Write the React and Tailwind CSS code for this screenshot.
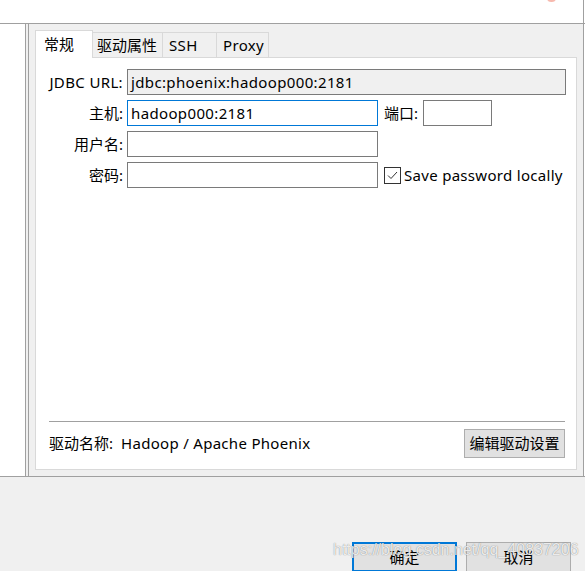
import React from "react";

const font = { fontFamily: '"Noto Sans", "Noto Sans CJK SC", sans-serif' };

function Input({ w, value = "", focused = false, disabled = false }) {
  return (
    <div
      className={`h-[26px] flex items-center pl-[3px] border text-[15px] text-black ${
        focused ? "border-[#0078d7]" : "border-[#7a7a7a]"
      } ${disabled ? "bg-[#f0f0f0]" : "bg-white"}`}
      style={{ width: w }}
    >
      <span className="leading-none tracking-[0.36px]">{value}</span>
    </div>
  );
}

function Label({ children, latin = false }) {
  return (
    <div className={`w-[74px] text-right text-[15px] text-black leading-none shrink-0 ${latin ? "tracking-[0.36px]" : ""}`}>
      {children}
    </div>
  );
}

export default function App() {
  return (
    <div className="w-[585px] h-[571px] bg-[#f0f0f0] flex flex-col overflow-hidden relative select-none" style={font}>
      {/* top white strip */}
      <div className="h-[23px] flex shrink-0">
        <div className="w-[583px] bg-white relative">
          <div className="absolute left-[547px] top-[-6px] w-[9px] h-[8px] rounded-full bg-[#f7b9ae]" />
        </div>
        <div className="w-px bg-[#a0a0a0]" />
        <div className="w-px bg-white" />
      </div>
      <div className="h-px bg-[#a0a0a0] shrink-0" />

      {/* main area */}
      <div className="h-[452px] flex shrink-0">
        <div className="w-[25px] bg-white" />
        <div className="w-px bg-[#a0a0a0]" />
        <div className="w-[2px] bg-[#f0f0f0]" />
        <div className="w-px bg-[#a0a0a0]" />
        <div className="w-[554px] bg-[#f0f0f0] p-[6px] flex flex-col">
          {/* tabs */}
          <div className="h-[27px] flex items-end shrink-0">
            <div className="relative z-10 h-[28px] mb-[-1px] w-[58px] bg-white border border-b-0 border-[#d9d9d9] pl-[8px] pt-[4px] text-[15px] text-black leading-[18px]">
              常规
            </div>
            <div className="h-[25px] w-[70px] border-t border-r border-[#d9d9d9] bg-[#f0f0f0] pl-[4px] pt-[3px] text-[15px] text-black leading-[18px]">
              驱动属性
            </div>
            <div className="h-[25px] w-[54px] border-t border-r border-[#d9d9d9] bg-[#f0f0f0] pl-[6px] pt-[3px] text-[15px] text-black leading-[18px] tracking-[0.36px]">
              SSH
            </div>
            <div className="h-[25px] w-[52px] border-t border-r border-[#d9d9d9] bg-[#f0f0f0] pl-[6px] pt-[3px] text-[15px] text-black leading-[18px] tracking-[0.36px]">
              Proxy
            </div>
          </div>

          {/* panel */}
          <div className="flex-1 bg-white border border-[#d9d9d9] flex flex-col pl-[13px] pr-[10px] pt-[11px] pb-[11px]">
            <div className="flex flex-col gap-[5px]">
              <div className="flex items-center">
                <Label latin>JDBC URL:</Label>
                <div className="ml-[4px]">
                  <Input w={439} value="jdbc:phoenix:hadoop000:2181" disabled />
                </div>
              </div>
              <div className="flex items-center">
                <Label>主机:</Label>
                <div className="ml-[4px]">
                  <Input w={251} value="hadoop000:2181" focused />
                </div>
                <div className="ml-[6px] w-[35px] text-[15px] text-black leading-none">端口:</div>
                <div className="ml-[4px]">
                  <Input w={69} />
                </div>
              </div>
              <div className="flex items-center">
                <Label>用户名:</Label>
                <div className="ml-[4px]">
                  <Input w={251} />
                </div>
              </div>
              <div className="flex items-center">
                <Label>密码:</Label>
                <div className="ml-[4px]">
                  <Input w={251} />
                </div>
                <div className="ml-[6px] w-[17px] h-[17px] border border-[#333333] bg-white flex items-center justify-center">
                  <svg width="13" height="13" viewBox="0 0 13 13">
                    <polyline points="2,6.5 5,9.5 11,3" fill="none" stroke="#333333" strokeWidth="1" />
                  </svg>
                </div>
                <div className="ml-[3px] text-[15px] text-black leading-none tracking-[0.3px]">Save password locally</div>
              </div>
            </div>

            <div className="flex-1" />
            <div className="h-px bg-[#a0a0a0] mr-[1px]" />
            <div className="mt-[7px] flex items-center justify-between">
              <div className="flex items-center text-[15px] text-black leading-none">
                <span>驱动名称:</span>
                <span className="ml-[8px] tracking-[0.3px]">Hadoop / Apache Phoenix</span>
              </div>
              <div className="h-[29px] w-[101px] mr-[1px] bg-[#e1e1e1] border border-[#adadad] flex items-center justify-center text-[15px] text-black leading-none">
                编辑驱动设置
              </div>
            </div>
          </div>
        </div>
        <div className="w-px bg-[#a0a0a0]" />
        <div className="w-px bg-white" />
      </div>
      <div className="h-px bg-[#a0a0a0] shrink-0" />

      {/* bottom area */}
      <div className="flex-1 flex justify-end items-start pt-[65px] pr-[14px] gap-[9px]">
        <div className="w-[105px] h-[30px] bg-[#e1e1e1] border-2 border-[#0078d7] flex items-center justify-center text-[15px] text-black leading-none">
          确定
        </div>
        <div className="w-[105px] h-[30px] bg-[#e1e1e1] border border-[#adadad] flex items-center justify-center text-[15px] text-black leading-none">
          取消
        </div>
      </div>

      {/* watermark */}
      <div
        className="absolute left-[333px] top-[540px] text-[16px] leading-[20px] text-white/85 pointer-events-none [text-shadow:0_0_1px_rgba(0,0,0,0.55)]"
        style={{ fontFamily: '"Liberation Sans", Arial, sans-serif' }}
      >
        https://blog.csdn.net/qq_40837206
      </div>
    </div>
  );
}
